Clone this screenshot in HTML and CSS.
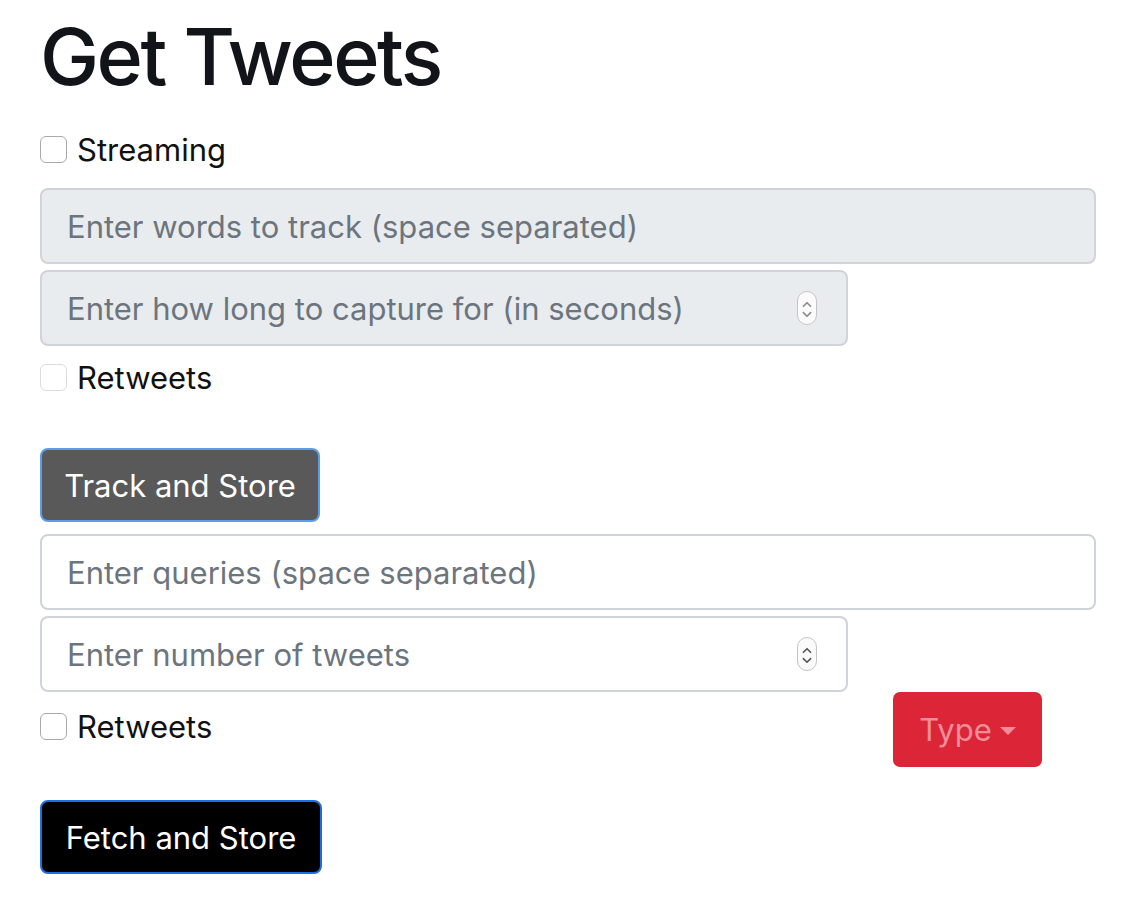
FILE: index.html
```html
<!DOCTYPE html>
<html lang="en">
<head>
<meta charset="utf-8">
<title>Get Tweets</title>
<link rel="stylesheet" href="styles.css">
</head>
<body>
<main class="page">
  <h1 class="title">Get Tweets</h1>

  <label class="check check-top">
    <span class="box"></span>
    <span class="check-label">Streaming</span>
  </label>

  <div class="field field-disabled field-wide">
    <input class="field-input" type="text" placeholder="Enter words to track (space separated)" disabled>
  </div>
  <div class="field field-disabled field-narrow gap-small">
    <input class="field-input" type="text" placeholder="Enter how long to capture for (in seconds)" disabled>
    <span class="spinner"><svg viewBox="0 0 20 34" width="20" height="34"><path d="M6 14 L10 10 L14 14" /><path d="M6 21 L10 25 L14 21" /></svg></span>
  </div>

  <label class="check check-mid">
    <span class="box box-disabled"></span>
    <span class="check-label">Retweets</span>
  </label>

  <button class="btn btn-track" type="button">Track and Store</button>

  <div class="field field-wide gap-btn">
    <input class="field-input" type="text" placeholder="Enter queries (space separated)">
  </div>
  <div class="field field-narrow gap-small">
    <input class="field-input" type="text" placeholder="Enter number of tweets">
    <span class="spinner"><svg viewBox="0 0 20 34" width="20" height="34"><path d="M6 14 L10 10 L14 14" /><path d="M6 21 L10 25 L14 21" /></svg></span>
  </div>

  <div class="options-row">
    <label class="check">
      <span class="box"></span>
      <span class="check-label">Retweets</span>
    </label>
    <button class="btn btn-type" type="button">Type <span class="caret"></span></button>
  </div>

  <button class="btn btn-fetch" type="button">Fetch and Store</button>
</main>
</body>
</html>
```

FILE: styles.css
```css
* { box-sizing: border-box; }

html, body {
  margin: 0;
  padding: 0;
  background: #ffffff;
}

body {
  font-family: Inter, "Liberation Sans", Arial, sans-serif;
  color: #000;
}

.page {
  display: flex;
  flex-direction: column;
  align-items: flex-start;
  padding: 4px 32px 0 40px;
  width: 1128px;
}

.title {
  margin: 0;
  font-size: 79px;
  font-weight: 500;
  line-height: 104px;
  color: #111418;
  letter-spacing: -2.5px;
}

.check {
  display: flex;
  align-items: center;
  gap: 10px;
  height: 48px;
  font-size: 31px;
  color: #111;
}

.check-top { margin-top: 17px; }
.check-mid { margin-top: 7px; }

.box {
  width: 27px;
  height: 27px;
  border: 1.5px solid #a9a9a9;
  border-radius: 6px;
  background: #fff;
  flex: none;
}

.box-disabled {
  border-color: #dcdcdc;
}

.field {
  display: flex;
  align-items: center;
  height: 76px;
  border: 2px solid #ced4da;
  border-radius: 8px;
  background: #fff;
  padding: 0 29px 0 25px;
  margin-top: 15px;
}

.gap-small { margin-top: 6px; }
.gap-btn { margin-top: 12px; }

.field-wide { width: 1056px; }
.field-narrow { width: 808px; }

.field-disabled {
  background: #e9ecef;
}

.field-input {
  flex: 1;
  min-width: 0;
  border: none;
  outline: none;
  background: transparent;
  font: inherit;
  font-size: 31px;
  color: #495057;
  padding: 0;
}

.field-input::placeholder {
  color: #6c757d;
  opacity: 1;
}

.spinner {
  width: 20px;
  height: 34px;
  border: 1.5px solid #c4c4c4;
  border-radius: 10px;
  background: #fbfbfb;
  display: flex;
  flex: none;
}

.spinner svg {
  display: block;
}

.spinner path {
  fill: none;
  stroke: #555;
  stroke-width: 1.8;
  stroke-linecap: round;
  stroke-linejoin: round;
}

.field-disabled .spinner path { stroke: #8a8a8a; }

.btn {
  font: inherit;
  font-size: 31px;
  line-height: 1;
  height: 74px;
  border-radius: 8px;
  padding: 0;
  white-space: nowrap;
  text-align: center;
  cursor: pointer;
}

.btn-track {
  margin-top: 47px;
  width: 280px;
  background: #595959;
  color: #fff;
  border: 2px solid #5d9de8;
}

.options-row {
  display: flex;
  align-items: flex-start;
  justify-content: space-between;
  width: 1002px;
}

.options-row .check {
  margin-top: 10px;
}

.btn-type {
  width: 149px;
  height: 75px;
  background: #dc2638;
  border: none;
  color: #ef8e98;
  border-radius: 7px;
  display: flex;
  align-items: center;
  justify-content: center;
  gap: 8px;
}

.caret {
  width: 0;
  height: 0;
  border-left: 8px solid transparent;
  border-right: 8px solid transparent;
  border-top: 8px solid #ef8e98;
  margin-top: 2px;
}

.btn-fetch {
  margin-top: 33px;
  width: 282px;
  background: #000;
  color: #fff;
  border: 2px solid #1b6fe0;
}
```
